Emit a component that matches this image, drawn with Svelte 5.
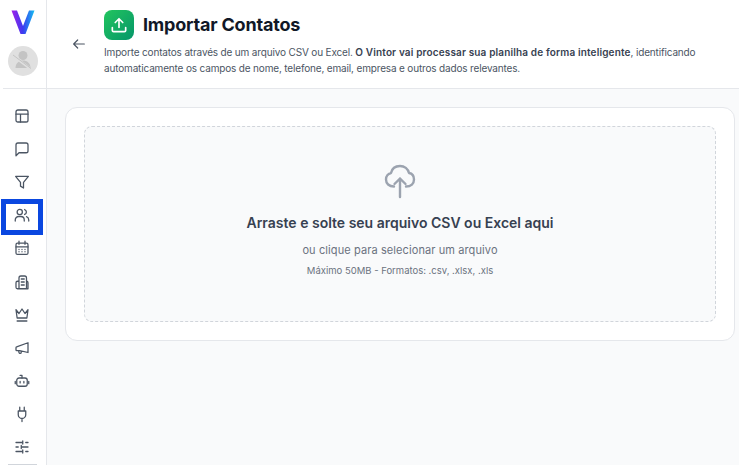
<script>
  const navIcons = [
    '<rect x="4" y="4" width="16" height="16" rx="2.5"/><path d="M4 9.5h16M10 9.5V20"/>',
    '<path d="M4 6.5A2.5 2.5 0 0 1 6.5 4h11A2.5 2.5 0 0 1 20 6.5v8a2.5 2.5 0 0 1-2.5 2.5H8l-4 4z"/>',
    '<path d="M3.5 4.5h17l-6.5 8v7.5l-4-2.500v-5z"/>',
    '<circle cx="9" cy="8" r="3.500"/><path d="M3 20v-1.500A4.500 4.500 0 0 1 7.500 14h3a4.500 4.500 0 0 1 4.500 4.500V20M15.500 4.700a3.500 3.500 0 0 1 0 6.600M21 20v-1.500a4.500 4.500 0 0 0-3-4.200"/>',
    '<rect x="4" y="5.500" width="16" height="15" rx="2"/><path d="M4 10.500h16M8 3v4M16 3v4M8 14h.01M12 14h.01M16 14h.01M8 17h.01M12 17h.01M16 17h.01"/>',
    '<path d="M8 21V6.500A2.500 2.500 0 0 1 10.500 4h5A2.500 2.500 0 0 1 18 6.500V21M8 11H6a2 2 0 0 0-2 2v6a2 2 0 0 0 2 2h14v-8a2 2 0 0 0-2-2M11 8h4M11 12h4M11 16h4"/>',
    '<path d="M4 5l4 5 4-6 4 6 4-5-1.500 11h-13zM5.500 20h13"/>',
    '<path d="M20 5v13L9 15.500H5a1 1 0 0 1-1-1v-3a1 1 0 0 1 .8-1zM7.500 15.500l.5 2.500a1.500 1.500 0 0 0 3-.5l-.2-1.300"/>',
    '<rect x="5" y="8" width="14" height="11" rx="3"/><path d="M12 8V4.500M9.500 4.500h2.500M3 12.500v3M21 12.500v3M9.500 12.500v2M14.500 12.500v2"/>',
    '<path d="M9 3v5M15 3v5M7 8h10v5a5 5 0 0 1-10 0zM12 18v4"/>',
    '<path d="M4 6h9M17 6h3M4 12h3M11 12h9M4 18h9M17 18h3M13 4v4M11 10v4M13 16v4"/>'
  ];
</script>

<div class="app">
  <aside class="sidebar">
    <div class="brand">
      <svg class="logo" viewBox="0 0 24 24" width="24" height="24" aria-label="Vintor">
        <defs>
          <linearGradient id="vg" x1="0" y1="0" x2="1" y2="0">
            <stop offset="0" stop-color="#a31fe8" />
            <stop offset="0.5" stop-color="#3b3bf0" />
            <stop offset="1" stop-color="#14c0f0" />
          </linearGradient>
        </defs>
        <path d="M0.500 0.500H6L12 16L18 0.500H23.500L14.500 24H9.500Z" fill="url(#vg)" />
      </svg>
      <div class="avatar">
        <svg viewBox="0 0 30 30" width="30" height="30">
          <circle cx="15" cy="9.500" r="4.500" fill="#c4c4c4" />
          <path d="M7.500 22c0-5 3.500-7.500 7.500-7.500s7.500 2.500 7.500 7.500z" fill="#c4c4c4" />
          <path d="M4 9l18 13.500" stroke="#e0e0e0" stroke-width="2.500" />
          <path d="M5 9l18 13.500" stroke="#c4c4c4" stroke-width="1" />
        </svg>
      </div>
    </div>
    <nav class="nav">
      {#each navIcons as icon, i}
        <div class="nav-item" class:selected={i === 3}>
          <svg viewBox="0 0 24 24" width="18" height="18" fill="none" stroke="#4b5563" stroke-width="1.700" stroke-linecap="round" stroke-linejoin="round">{@html icon}</svg>
        </div>
      {/each}
      <div class="nav-end"></div>
    </nav>
  </aside>

  <main class="main">
    <header class="header">
      <svg class="back" viewBox="0 0 24 24" width="16" height="16" fill="none" stroke="#4b5563" stroke-width="1.800" stroke-linecap="round" stroke-linejoin="round">
        <path d="M20 12H4M10 6l-6 6 6 6" />
      </svg>
      <div class="head-text">
        <div class="title-row">
          <div class="badge">
            <svg viewBox="0 0 24 24" width="20" height="20" fill="none" stroke="#fff" stroke-width="2" stroke-linecap="round" stroke-linejoin="round">
              <path d="M4 15v3.500A1.500 1.500 0 0 0 5.500 20h13a1.500 1.500 0 0 0 1.500-1.500V15M12 15V4.500M7.500 9L12 4.500 16.500 9" />
            </svg>
          </div>
          <h1>Importar Contatos</h1>
        </div>
        <p class="desc">Importe contatos através de um arquivo CSV ou Excel. <strong>O Vintor vai processar sua planilha de forma inteligente</strong>, identificando automaticamente os campos de nome, telefone, email, empresa e outros dados relevantes.</p>
      </div>
    </header>

    <section class="content">
      <div class="card">
        <div class="drop">
          <svg class="cloud" viewBox="0 0 32 36" width="32" height="36" fill="none" stroke="#9ca3af" stroke-width="2.400" stroke-linecap="round" stroke-linejoin="round">
            <path d="M10 23.500C5 23.500 2 20.500 2 16.500C2 13 4.500 10.500 7 10C8 5.500 11.500 3 16 3C20.500 3 24 6 25 10C28 10.500 30 13 30 16.500C30 20.500 27 23.500 22 23.500" />
            <path d="M16 34V15.500M10.500 21L16 15.500L21.500 21" />
          </svg>
          <h2>Arraste e solte seu arquivo CSV ou Excel aqui</h2>
          <p class="sub">ou clique para selecionar um arquivo</p>
          <p class="hint">Máximo 50MB - Formatos: .csv, .xlsx, .xls</p>
        </div>
      </div>
    </section>
  </main>
</div>

<style>
  :global(body) { margin: 0; background: #fff; }
  .app {
    display: flex;
    width: 739px;
    height: 465px;
    overflow: hidden;
    font-family: Inter, "Noto Sans", sans-serif;
    color: #111827;
  }
  .sidebar {
    width: 46px;
    flex: none;
    border-right: 1px solid #e5e7eb;
    background: #fff;
  }
  .brand {
    height: 88px;
    margin-left: 3px;
    border-bottom: 1px solid #e5e7eb;
    display: flex;
    flex-direction: column;
    align-items: center;
  }
  .logo { margin: 10px 3px 0 0; }
  .avatar {
    width: 30px;
    height: 30px;
    margin: 12px 3px 0 0;
    border-radius: 50%;
    background: #e0e0e0;
    overflow: hidden;
  }
  .avatar svg { display: block; }
  .nav {
    display: flex;
    flex-direction: column;
    align-items: center;
    padding-top: 10.500px;
    width: 44px;
  }
  .nav-item {
    height: 33.100px;
    width: 44px;
    flex: none;
    display: flex;
    align-items: center;
    justify-content: center;
  }
  .nav-end {
    width: 29px;
    height: 1px;
    flex: none;
    margin-left: 1px;
    background: #d1d5db;
  }
  .nav-item.selected { position: relative; }
  .nav-item.selected::after {
    content: "";
    position: absolute;
    left: 1px;
    top: 0;
    width: 42px;
    height: 36px;
    box-sizing: border-box;
    border: 5px solid #0a47e0;
  }
  .main {
    flex: 1;
    min-width: 0;
    display: flex;
    flex-direction: column;
    background: #f9fafb;
  }
  .header {
    height: 88px;
    flex: none;
    display: flex;
    background: #fff;
    border-bottom: 1px solid #e5e7eb;
    padding-left: 24px;
  }
  .back { margin-top: 36px; flex: none; }
  .head-text { margin-left: 17px; padding-top: 10px; }
  .title-row { display: flex; align-items: center; gap: 9px; height: 30px; }
  .badge {
    width: 30px;
    height: 30px;
    border-radius: 8px;
    background: linear-gradient(135deg, #22c55e, #059669);
    display: flex;
    align-items: center;
    justify-content: center;
  }
  h1 {
    margin: 0;
    font-size: 18px;
    line-height: 28px;
    font-weight: 700;
    letter-spacing: -0.200px;
    color: #111827;
  }
  .desc {
    margin: 4px 0 0;
    width: 610px;
    font-size: 10px;
    line-height: 16px;
    letter-spacing: -0.160px;
    color: #4b5563;
  }
  .desc strong { font-weight: 600; letter-spacing: 0.150px; color: #374151; }
  .content { flex: 1; padding: 18px 4px 0 18px; }
  .card {
    height: 234px;
    box-sizing: border-box;
    background: #fff;
    border: 1px solid #e5e7eb;
    border-radius: 12px;
    padding: 18px;
  }
  .drop {
    height: 196px;
    box-sizing: border-box;
    border: 1px dashed #d1d5db;
    border-radius: 8px;
    background: #f9fafb;
    display: flex;
    flex-direction: column;
    align-items: center;
    padding-top: 36px;
  }
  .cloud { display: block; }
  h2 {
    margin: 14px 0 0;
    font-size: 14px;
    line-height: 20px;
    font-weight: 600;
    color: #374151;
  }
  .sub {
    margin: 9px 0 0;
    font-size: 11px;
    line-height: 16px;
    letter-spacing: 0.100px;
    color: #6b7280;
  }
  .hint {
    margin: 6px 0 0;
    font-size: 9.500px;
    line-height: 14px;
    color: #6b7280;
  }
</style>
